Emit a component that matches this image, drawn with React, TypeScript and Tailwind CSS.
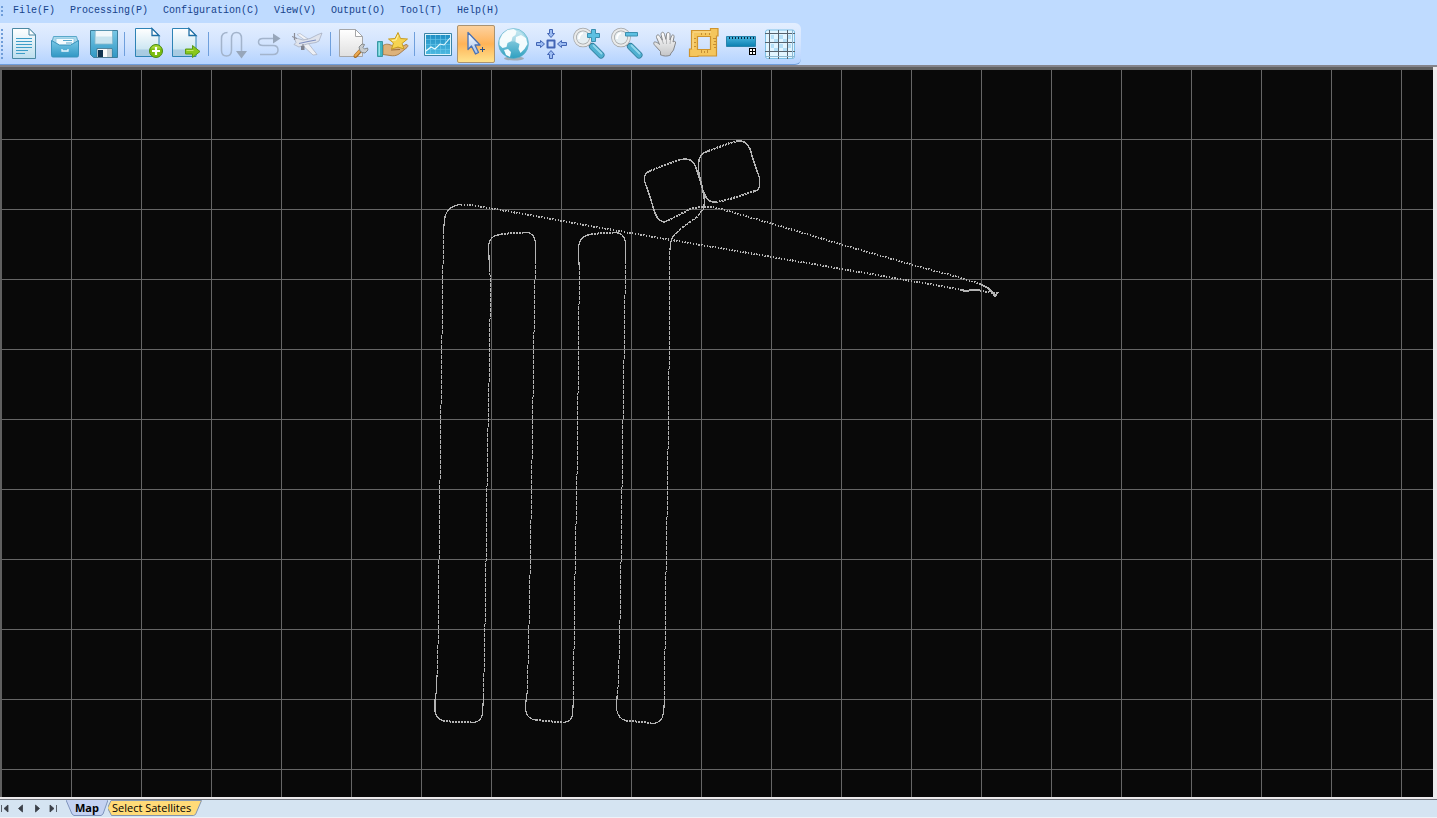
import React, { useState } from "react";

const menus = ["File(F)", "Processing(P)", "Configuration(C)", "View(V)", "Output(O)", "Tool(T)", "Help(H)"];

type Tool = { label: string; x: number; art: React.ReactNode };

const pageOutline = (x: number) => (
  <>
    <path d={`M${x + 0.5} 28.5h16.500l7 7v21h-23.500z`} fill="url(#page)" stroke="#2e83b5" />
    <path d={`M${x + 1} 49.500h22.500v6.500h-22.500z`} fill="#9fc3dc" opacity=".75" />
    <path d={`M${x + 17} 28.5v7h7z`} fill="#fff" stroke="#1f6fa5" strokeWidth="1.300" />
  </>
);

const lens = (cx: number) => (
  <>
    <path d={`M${cx + 6} 43.500l3 3`} stroke="#9a9ea1" strokeWidth="4" />
    <path d={`M${cx + 9.5} 46.500l8.500 8.500`} stroke="#2f7d9c" strokeWidth="7" strokeLinecap="round" />
    <path d={`M${cx + 9.5} 46.500l8.500 8.500`} stroke="#4fb0d0" strokeWidth="5.400" strokeLinecap="round" />
    <path d={`M${cx + 10.5} 45.500l8 8`} stroke="#93d7ec" strokeWidth="1.800" strokeLinecap="round" />
    <circle cx={cx} cy="37.500" r="8" fill="#e6eef2" stroke="#a1a3a4" strokeWidth="3.600" />
    <circle cx={cx} cy="37.500" r="8" fill="none" stroke="#e9eaea" strokeWidth="2.200" />
    <path d={`M${cx - 4} 39a5 6 0 0 1 4-6`} stroke="#fff" strokeWidth="2" fill="none" />
  </>
);

const groups: Tool[][] = [
  [
    {
      label: "New",
      x: 3,
      art: (
        <>
          <path d="M12.5 28.5h16.500l6.500 6.500v23.500h-23z" fill="url(#page)" stroke="#4a88a3" />
          <path d="M29 28.500v6.500h6.500z" fill="#fff" stroke="#4a88a3" />
          <path d="M16 38.500h16M16 41.500h16M16 44.500h16M16 47.500h16M16 50.500h12M16 53.500h9" stroke="#3c9dc8" strokeWidth="1.200" />
        </>
      ),
    },
    {
      label: "Open",
      x: 43,
      art: (
        <>
          <path d="M53.500 36.500h23l2 7h-27z" fill="#a9d8ec" stroke="#5aa8ca" />
          <path d="M56 38.500h18v8H56z" fill="#f4fbfe" stroke="#8cc6df" strokeWidth=".8" />
          <path d="M63 40.500h9M66 43h6" stroke="#5aa9cd" />
          <path d="M51.500 40.500l8 4.500h11l8-4.500v15q0 1.500-1.500 1.500h-24q-1.500 0-1.500-1.500z" fill="url(#blue)" stroke="#3a93bb" />
          <path d="M62 49v2h6v-2" stroke="#e8f8ff" strokeWidth="1.300" fill="none" />
        </>
      ),
    },
    {
      label: "Save",
      x: 83,
      art: (
        <>
          <path d="M90.500 30.500h27v27h-24l-3-3z" fill="url(#blue)" stroke="#3d7f9d" />
          <path d="M95 31h17.500v13H95z" fill="#c9e4ef" stroke="#86b8cc" strokeWidth=".8" />
          <path d="M96 31h16v5.500H96z" fill="#f1f8fb" />
          <path d="M97 48.500h15v9H97z" fill="#fafafa" stroke="#3f6f87" strokeWidth=".8" />
          <path d="M98 50h5v7H98z" fill="#12334f" />
          <path d="M107 49v8h4.500v-8z" fill="#c9d1d5" />
        </>
      ),
    },
  ],
  [
    {
      label: "Add file",
      x: 129,
      art: (
        <>
          {pageOutline(135)}
          <circle cx="156" cy="51" r="6.500" fill="#7cbd10" stroke="#4a8a12" />
          <path d="M151 48.500a5.500 5.500 0 0 1 10 0z" fill="#a5d63a" />
          <path d="M156 47v8M152 51h8" stroke="#fff" strokeWidth="2.200" />
        </>
      ),
    },
    {
      label: "Export",
      x: 167,
      art: (
        <>
          {pageOutline(172)}
          <path d="M185.500 49h7v-3.500l7.500 6-7.500 6V54h-7z" fill="#8ac81c" stroke="#5b9a18" />
          <path d="M186.500 50.500h7" stroke="#c5e86a" />
        </>
      ),
    },
  ],
  [
    {
      label: "Forward pass",
      x: 213,
      art: (
        <>
          <path d="M227.500 32.500c-4 0-6 2-6 6v12c0 4 2 5.500 5 5.500s5-2 5-6V38.500c0-4 2-6 5-6s5 2 5 6V52" fill="none" stroke="#a3b4cc" strokeWidth="1.500" />
          <path d="M236 51h11l-5.500 7.500z" fill="#97a6ba" />
        </>
      ),
    },
    {
      label: "Reverse pass",
      x: 251,
      art: (
        <>
          <path d="M274 38.500h-11c-3 0-4.500 1.500-4.500 3.500s1.500 3.500 4.500 3.500h10c3.500 0 5 2 5 4.500s-1.500 4.500-5 4.500h-13" fill="none" stroke="#a3b4cc" strokeWidth="1.500" />
          <path d="M273 33.500l7.500 5-7.500 5z" fill="#97a6ba" />
        </>
      ),
    },
    {
      label: "Aircraft",
      x: 289,
      art: (
        <>
          <path d="M300 43l13 12 4-.5-9-11.500z" fill="#eef0f5" stroke="#a7aebd" strokeWidth=".7" />
          <path d="M294 37.500l9 2.500 7-1.500 8-4 4-1.500-3 8-3 1.500-9 1.500-8 3-5-2.500 2-2z" fill="#dfe3ec" stroke="#a0a9bc" strokeWidth=".7" />
          <path d="M299 43.500l9-2 8-1.500" stroke="#7f8fc0" strokeWidth="1.200" />
          <path d="M308 39l-8-5.500-3 1 7 5z" fill="#f2f4f8" stroke="#a7aebd" strokeWidth=".6" />
          <path d="M294.500 33v7M303 44v5" stroke="#8a8c96" strokeWidth="1.200" />
          <path d="M292 36.500l5 2" stroke="#8a8c96" />
          <path d="M301 46h3.500v4h-3.500z" fill="#7f828e" />
        </>
      ),
    },
  ],
  [
    {
      label: "Project settings",
      x: 335,
      art: (
        <>
          <path d="M339.500 29.500h16l7 7v20h-23z" fill="url(#paper)" stroke="#a5a6a8" />
          <path d="M355.500 29.500v7h7z" fill="#fff" stroke="#a5a6a8" />
          <path d="M355.500 56l5.500-6" stroke="#a5691f" strokeWidth="4" strokeLinecap="round" />
          <path d="M355.500 55.500l5-5.500" stroke="#eba850" strokeWidth="2.400" strokeLinecap="round" />
          <path d="M360 51l-1-4 3-3 2.500.5-1.500 3 1.500 1.500 3-1 .5 2-3 3-3-.5z" fill="#c9ccce" stroke="#7d8285" strokeWidth=".9" />
        </>
      ),
    },
    {
      label: "Favorites",
      x: 373,
      art: (
        <>
          <path d="M383 45.500c3-2 6-1.500 10 .5l7 1.500 6-3c2 0 2.500 1.500 1 3l-8 6.500c-3 2-6 2-9 1.500l-7-1z" fill="#ddb27a" stroke="#a27844" strokeWidth=".9" />
          <path d="M391 50l9-.5" stroke="#9a6d38" />
          <path d="M377.500 41.500h5v15h-5z" fill="#42b7c3" stroke="#3a98a4" />
          <path d="M378.500 42.500h1.500v13h-1.500z" fill="#9be3e7" />
          <path d="M398 32.500l2.500 6 7 .5-5.500 4.500 2 5.500-6-2-6.500 2 2-6-5-4 6.500-.5z" fill="#f6d451" stroke="#c99d22" strokeLinejoin="round" />
          <path d="M398 35l-2 5-4 .5" fill="none" stroke="#fff4ac" />
        </>
      ),
    },
  ],
  [
    {
      label: "Chart",
      x: 419,
      art: (
        <>
          <path d="M424.500 33.500h27v22h-27z" fill="#dff5fd" stroke="#3b83a6" />
          <path d="M426 35h24v19h-24z" fill="url(#chart)" />
          <path d="M430.500 35v19M435.500 35v19M440.500 35v19M445.500 35v19M426 39.500h24M426 44.500h24M426 49.500h24" stroke="#6cc7eb" strokeWidth=".6" />
          <path d="M426 51l5-4 4 2 5-5 4 1 6-7" fill="none" stroke="#e9fbff" strokeWidth="1.100" />
        </>
      ),
    },
    {
      label: "Select",
      x: 457,
      art: (
        <>
          <path d="M468 32.500v17l3.500-3.500 4 8 3-1.500-3.500-7.500h5z" fill="url(#pointer)" stroke="#4a72b4" strokeWidth="1.300" strokeLinejoin="round" />
          <path d="M482.500 47v5M480 49.500h5" stroke="#2f4f80" />
        </>
      ),
    },
    {
      label: "Globe",
      x: 495,
      art: (
        <>
          <ellipse cx="514" cy="58.500" rx="10" ry="2" fill="#8c8c84" opacity=".6" />
          <circle cx="513.500" cy="43.500" r="15" fill="url(#globe)" stroke="#5fb0c8" strokeWidth=".6" />
          <path d="M499.500 40l3-6 5-4 6-1 3 2-1 4-3 2-1 4-4 2-1 4-4 1-3-3zM516 37l5-2 5 3 1.500 6-3 5-4 4-2-4 1-5-4-2zM504 50l4-1 3 3-1 5-4-2z" fill="#f3fbfd" />
          <path d="M500.500 40a13.500 13.500 0 0 1 26 0q-13 3-26 0z" fill="#fff" opacity=".3" />
        </>
      ),
    },
    {
      label: "Center view",
      x: 533,
      art: (
        <g fill="#9cbcf2" stroke="#4265b5" strokeLinejoin="round">
          <path d="M547.500 40.500h7v7h-7z" fill="#cfe0fc" strokeWidth="2" />
          <path d="M549.500 29.500h3v4h2L551 37.500l-3.500-4h2zM549.500 58.500h3v-4h2L551 50.500l-3.500 4h2zM536.500 42.500h4v-2l4 3.500-4 3.500v-2h-4zM566.500 42.500h-5v-2l-4 3.500 4 3.500v-2h5z" />
        </g>
      ),
    },
    {
      label: "Zoom in",
      x: 571,
      art: (
        <>
          {lens(583)}
          <path d="M591.500 29.500h4v4h4v4h-4v4h-4v-4h-4v-4h4z" fill="#5cc0e2" stroke="#3a8fb0" />
        </>
      ),
    },
    {
      label: "Zoom out",
      x: 609,
      art: (
        <>
          {lens(621)}
          <path d="M625.500 32.500h12v3.500h-12z" fill="#5cc0e2" stroke="#3a8fb0" />
        </>
      ),
    },
    {
      label: "Pan",
      x: 647,
      art: (
        <>
          <path d="M660.500 54.500v-3l-5.500-6c-2-2-1.500-4 .5-3.500s3 1.500 4 2.500l-3-7c-.5-3 2-3.500 3.500-1l2.500 4-1.500-6c0-3 3-3 3.500 0l1.500 5 .5-5.500c.5-2 3-2 3.500 0v6l1.500-4c1-2 3-1 2.500 1l-1 5c1-1 3-1 2.500 1l-2 7-3 4v1c-3 1.500-7 1.500-10.500-.5z" fill="url(#hand)" stroke="#85878a" strokeLinejoin="round" />
          <path d="M662 40l1.500 4M666.500 39v5M670.500 40l-.5 4" stroke="#b5b6b8" />
        </>
      ),
    },
    {
      label: "Measure area",
      x: 685,
      art: (
        <>
          <path d="M691.500 30.500h19v-2h7.500v7.500h-1.500v20h-18.500v.5h-8.500v-7.500h2zM697.500 36.500v13h13v-13z" fill="#f5c65c" fillRule="evenodd" stroke="#cf942e" strokeWidth="1.200" />
          <path d="M693 32h18M693 33v16" stroke="#fbdc94" />
          <path d="M713 38.500h3M714 41.500h2M713 44.500h3M714 47.500h2M701.500 50v3M704.500 51v2M707.500 50v3M694 38.500h2M694 42.500h2M694 46.500h2M701.500 33v2M705.500 33v2M709.500 33v2" stroke="#b98029" strokeWidth=".8" />
        </>
      ),
    },
    {
      label: "Measure distance",
      x: 723,
      art: (
        <>
          <path d="M726.500 36.500h29v10h-29z" fill="url(#ruler)" stroke="#2a84ad" />
          <path d="M729.500 37v2M732.500 37v2M735.500 37v2M738.500 37v2M741.500 37v2M744.500 37v2M747.500 37v2M750.500 37v2M753.500 37v2" stroke="#082942" />
          <path d="M749.500 48.500h6v6h-6zM752.500 48.500v6M749.500 51.500h6" fill="#fff" stroke="#000" shapeRendering="crispEdges" />
        </>
      ),
    },
    {
      label: "Grid",
      x: 761,
      art: (
        <>
          <rect x="765.500" y="30" width="29" height="28.500" rx="2" fill="#e2f5ff" stroke="#7cc0e6" />
          <path d="M771 35h3v4h-3zM779 35h4v4h-4zM788 35h3v4h-3zM774 39h4v3h-4zM783 39h4v3h-4zM771 44h3v4h-3zM779 44h4v4h-4zM788 44h3v4h-3zM774 48h4v3h-4zM783 48h4v3h-4z" fill="#b5e0f8" />
          <path d="M769.500 30v29M778.500 30v29M787.500 30v29M765 33.500h30M765 42.500h30M765 51.500h30" stroke="#56636e" />
          <path d="M792.500 30v29M765 56.500h30" stroke="#8fb9d2" />
        </>
      ),
    },
  ],
];

function Gradients() {
  const stops: [string, string, string][] = [
    ["page", "#ffffff", "#bcdeee"],
    ["paper", "#ffffff", "#e0e0e0"],
    ["hand", "#ffffff", "#c4c5c7"],
    ["blue", "#79c8e6", "#3097c4"],
    ["chart", "#2290c4", "#4bb8e0"],
    ["pointer", "#ffffff", "#a5c2ec"],
    ["globe", "#b5e2ee", "#2d9fc0"],
    ["ruler", "#4cb8e0", "#0a7fb0"],
  ];
  return (
    <svg className="absolute size-0" aria-hidden="true">
      <defs>
        {stops.map(([id, from, to]) => (
          <linearGradient key={id} id={id} x1="0" y1="0" x2="0" y2="1">
            <stop stopColor={from} />
            <stop offset="1" stopColor={to} />
          </linearGradient>
        ))}
      </defs>
    </svg>
  );
}

function Toolbar() {
  const [active, setActive] = useState("Select");
  return (
    <div role="toolbar" aria-label="Main tools" className="flex h-[42px] w-fit items-center rounded-r-md border-b border-[#6f9edb] bg-linear-to-b from-[#e3eeff] via-[#d3e4fe] to-[#b4d3ff] pr-[2px]">
      <div className="flex w-[3px] flex-col gap-[2px] pl-px">
        {Array.from({ length: 8 }, (_, i) => (
          <span key={i} className="size-[2px] bg-[#6f9dd9]" />
        ))}
      </div>
      {groups.map((group, i) => (
        <React.Fragment key={i}>
          {i > 0 && (
            <span className="w-2 pl-[3px]">
              <span className="block h-6 w-px bg-[#6f9fdc]" />
            </span>
          )}
          <div className={i === 0 ? "flex gap-[2px]" : "flex"}>
            {group.map(({ label, x, art }) => (
              <button
                key={label}
                type="button"
                aria-label={label}
                onClick={() => setActive(label)}
                className={
                  active === label
                    ? "size-[38px] rounded-xs bg-linear-to-b from-[#fcd3a1] via-[#ffb357] to-[#ffe58f] outline outline-1 -outline-offset-1 outline-[#a99372]"
                    : "size-[38px]"
                }
              >
                <svg viewBox={`${x} 25 38 38`} className="block size-[38px]" fill="none" aria-hidden="true">
                  {art}
                </svg>
              </button>
            ))}
          </div>
        </React.Fragment>
      ))}
    </div>
  );
}

function TrackMap() {
  return (
    <svg className="block h-full w-full bg-[#090909]" role="img" aria-label="Flight track">
      <defs>
        <pattern id="cells" x="-1" y="-1" width="70" height="70" patternUnits="userSpaceOnUse">
          <path d="M0 .5h70M.5 0v70" stroke="#666666" />
        </pattern>
      </defs>
      <rect width="100%" height="100%" fill="url(#cells)" />
      <g transform="translate(-2 -70)" fill="none" stroke="#b4b4b4" strokeWidth="1.200" shapeRendering="crispEdges">
        {/* transit legs */}
        <g strokeDasharray="1.300 1.500" strokeWidth="2">
          <path d="M461 204.500L467 204.500L492 208.500L633 233.500L778 258L920 282.500L960 289.500" />
          <path d="M713 207L730 211.500L778 225.500L850 247L920 267L960 277.500L980 284" />
          <path d="M980 290.500L995 293.500" />
        </g>
        {/* survey lines */}
        <g strokeDasharray="4 1" strokeWidth="1">
          <path d="M443.500 230L442.500 300L440.500 440L438.500 600L438.500 630L437 675" />
          <path d="M483.500 697L485.500 600L487.500 450L489.500 360L490.500 280L489.500 270" />
          <path d="M535.500 260L534.500 300L532.500 430L530.500 550L528.500 650L527 695" />
          <path d="M573.500 700L574.500 600L577.500 450L578.500 340L579.500 270" />
          <path d="M625.500 260L624.500 330L622.500 450L620.500 600L618.500 680L617 700" />
          <path d="M664.500 700L665.500 600L667.500 490L669.500 330L670 250" />
        </g>
        {/* turns */}
        <path d="M443.500 230L444.500 220Q446 206 461 204.500" />
        <path d="M437 675L436.500 690L435 700V711Q436 719 443 720.500" />
        <path d="M471 722.500Q482 723 482.500 713L483.500 697" />
        <path d="M489.500 270L488.500 245Q490 235 501 234.500" />
        <path d="M523 232.500Q535 231 535.500 244V262" />
        <path d="M527 693L525.500 705Q525 719 536 720" />
        <path d="M563 722.500Q572 722 572.500 714L573.500 700" />
        <path d="M579.500 270L578.500 256V247Q580 235 591 234.500" />
        <path d="M613 232.500Q625 232 625.500 244V262" />
        <path d="M617 696L616.500 709Q618 719 626 720.500" />
        <path d="M651 723.500Q662 724 663.500 713L664.500 700" />
        <g strokeDasharray="2 1" strokeWidth="2">
          <path d="M443 720.500L450 721.500L471 722.500" />
          <path d="M501 234L523 232.500" />
          <path d="M536 720L546 721L563 722.500" />
          <path d="M591 234L613 232.500" />
          <path d="M626 720.500L651 723" />
        </g>
        {/* calibration loops */}
        <path d="M670 250Q670 238 676 233" />
        <path d="M676 233L683 227L697 217L703 209" strokeDasharray="3 1" strokeWidth="1.500" />
        <path d="M703.500 209L704.500 203L704 194L700.500 182L696 168Q693 159 686 159L680 159.500" strokeWidth="1.500" />
        <path d="M680 159.500L670 163L650 171" strokeDasharray="2 1" strokeWidth="2" />
        <path d="M650 171Q645 173 644.500 177L644.500 181L650 197L655 213Q658 221 664 222L668 220.500" strokeWidth="1.500" />
        <path d="M668 220.500L677 216L690 209L702 206.500L713 207" strokeDasharray="2 1" strokeWidth="2" />
        <path d="M704 196L701 182L698.500 171V163Q699 154 708 151" strokeWidth="1.500" />
        <path d="M708 151L730 143L738 141" strokeDasharray="2 1" strokeWidth="2" />
        <path d="M738 141Q746 140 750 149L753 159L759.500 178V186Q759 190 755 191" strokeWidth="1.500" />
        <path d="M755 191L730 199L717 202" strokeDasharray="2 1" strokeWidth="2" />
        <path d="M717 202Q709 203 706 197L703 190" strokeWidth="1.500" />
        <path d="M980 284L988 288L995 294.500M960 289.500L967 291.500L970 290L980 290.500" strokeWidth="2" />
        <path d="M992 292l3 4 3-4" strokeWidth="2" />
      </g>
    </svg>
  );
}

const navMarks = [
  { label: "First tab", path: "M1.500 1v7M8 1L4 4.500 8 8z" },
  { label: "Previous tab", path: "M6.500 1L2.500 4.500 6.500 8z" },
  { label: "Next tab", path: "M3.500 1L7.500 4.500 3.500 8z" },
  { label: "Last tab", path: "M2 1L6 4.500 2 8zM8.500 1v7" },
];

function TabStrip() {
  return (
    <footer className="flex h-[19px] items-start border-t border-b border-t-[#70747c] border-b-[#eef2f8] bg-[#d5e4f2]">
      <div className="flex w-[66px] gap-[6px] pt-1">
        {navMarks.map(({ label, path }) => (
          <button key={label} type="button" aria-label={label}>
            <svg viewBox="0 0 10 9" className="h-[9px] w-[10px]" fill="#3a3f48" stroke="#3a3f48" strokeWidth=".8" aria-hidden="true">
              <path d={path} />
            </svg>
          </button>
        ))}
      </div>
      <div role="tablist" className="flex">
        <button type="button" role="tab" aria-selected="true" className="relative h-4 w-[42px] text-center text-[11px] leading-[14px] font-bold text-black">
          <svg viewBox="0 0 42 16" className="absolute inset-0" aria-hidden="true">
            <path d="M0 0h42l-6 15.500H7z" fill="#c4d2f2" />
            <path d="M0 0l6 14 2 1.500h27l2-1.500 5-14" fill="none" stroke="#7e93bd" />
          </svg>
          <span className="relative block">Map</span>
        </button>
        <button type="button" role="tab" aria-selected="false" className="relative h-4 w-[94px] pl-1 text-left text-[11px] leading-[14px] whitespace-nowrap text-black">
          <svg viewBox="0 0 94 16" className="absolute inset-0" aria-hidden="true">
            <path d="M3 .5h90.500l-6 14-2 1H3.500L-.5 8z" fill="#ffdb78" stroke="#8495ae" />
          </svg>
          <span className="relative block">Select Satellites</span>
        </button>
      </div>
    </footer>
  );
}

export default function App() {
  return (
    <div className="flex h-screen flex-col overflow-hidden bg-[#bfdbff] font-['Open_Sans','Noto_Sans',sans-serif]">
      <Gradients />
      <header>
        <nav aria-label="Main menu" className="flex h-[23px] items-center pb-px font-['Liberation_Mono',monospace] text-[10px] leading-4 text-[#15428b]">
          <div className="flex w-[13px] flex-col gap-[2px] pl-px">
            <span className="size-[2px] bg-[#6f9dd9]" />
            <span className="size-[2px] bg-[#6f9dd9]" />
            <span className="size-[2px] bg-[#6f9dd9]" />
          </div>
          <div className="flex gap-[15px]">
            {menus.map((m) => (
              <button key={m} type="button">{m}</button>
            ))}
          </div>
        </nav>
        <Toolbar />
      </header>
      <main className="flex min-h-0 flex-1 flex-col border-t-2 border-[#85858c] bg-[#eceaec] pr-1 pb-[2px]">
        <div className="min-h-0 flex-1 border-t-3 border-l-2 border-[#606060]">
          <TrackMap />
        </div>
      </main>
      <TabStrip />
    </div>
  );
}
